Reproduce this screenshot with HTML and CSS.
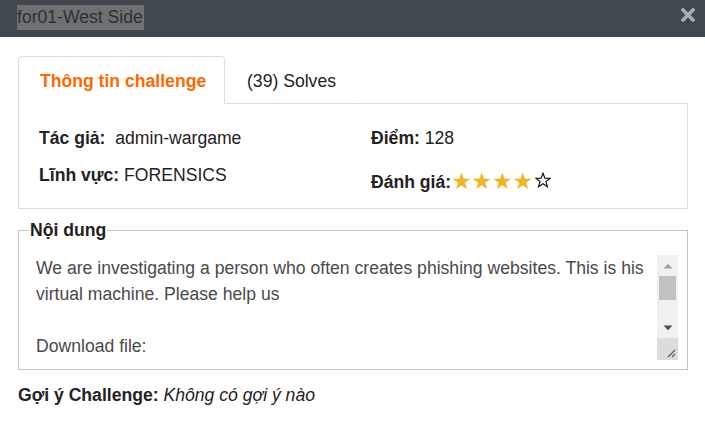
FILE: index.html
```html
<!DOCTYPE html>
<html lang="vi">
<head>
<meta charset="utf-8">
<link rel="stylesheet" href="styles.css">
</head>
<body>
<div class="modal">
  <div class="modal-header">
    <span class="title">for01-West Side</span>
    <svg class="close" width="14" height="14" viewBox="0 0 14 14"><path d="M2 2L12 12M12 2L2 12" stroke="#a9adb1" stroke-width="3.6" stroke-linecap="square"/></svg>
  </div>
  <div class="modal-body">
    <div class="tabs">
      <div class="tab active">Thông tin challenge</div>
      <div class="tab">(39) Solves</div>
      <div class="tab-fill"></div>
    </div>
    <div class="panel">
      <div class="info">
        <div class="cell"><b>Tác giả:</b>&nbsp; admin-wargame</div>
        <div class="cell"><b>Điểm:</b> 128</div>
        <div class="cell"><b>Lĩnh vực:</b> FORENSICS</div>
        <div class="cell rating"><b>Đánh giá:</b><span class="stars"><span class="on">★★★★</span></span><svg class="star-off" width="16" height="16" viewBox="0 0 16 16"><path d="M8 1.2L9.9 6.1L15.1 6.3L11 9.6L12.4 14.7L8 11.8L3.6 14.7L5 9.6L0.9 6.3L6.1 6.1Z" fill="none" stroke="#111" stroke-width="1.2" stroke-linejoin="miter"/></svg></div>
      </div>
    </div>
    <fieldset class="content">
      <legend>Nội dung</legend>
      <div class="desc-box">
        <textarea class="desc" readonly>We are investigating a person who often creates phishing websites. This is his virtual machine. Please help us

Download file:</textarea>
        <div class="scrollbar">
          <div class="sb-btn"><svg width="10" height="6" viewBox="0 0 10 6"><path d="M0.5 5.5L5 0.8L9.5 5.5Z" fill="#a3a3a3"/></svg></div>
          <div class="sb-thumb"></div>
          <div class="sb-track"></div>
          <div class="sb-btn"><svg width="10" height="6" viewBox="0 0 10 6"><path d="M0.5 0.5L5 5.2L9.5 0.5Z" fill="#505050"/></svg></div>
          <div class="sb-resizer"><svg width="21" height="22" viewBox="0 0 21 22"><path d="M18 12L11 19M18 16L15 19" stroke="#5a5a5a" stroke-width="1.2"/></svg></div>
        </div>
      </div>
    </fieldset>
    <div class="hint"><b>Gợi ý Challenge:</b> <i>Không có gợi ý nào</i></div>
  </div>
</div>
</body>
</html>
```
FILE: styles.css
```css
* { box-sizing: border-box; }
html, body { margin: 0; padding: 0; background: #fff; }
body { font-family: "Liberation Sans", Arial, sans-serif; font-size: 17.6px; color: #222; }

.modal-header {
  height: 37px;
  background: #41474f;
  display: flex;
  align-items: flex-start;
  justify-content: space-between;
  padding: 5px 10px 0 17px;
}
.title {
  background: #6e7173;
  color: #2d2f31;
  font-size: 17.6px;
  line-height: 25px;
  height: 25px;
  padding: 0 1px 0 0;
}
.close { display: block; margin-top: 3px; }

.modal-body { padding: 19px 17px 0 18px; }

.tabs { display: flex; height: 48px; }
.tab {
  padding: 0 21px;
  line-height: 48px;
  color: #222;
  border: 1px solid transparent;
  border-bottom: 1px solid #ddd;
}
.tab.active {
  color: #ff6a00;
  font-weight: bold;
  border: 1px solid #ddd;
  border-bottom-color: #fff;
  border-radius: 4px 4px 0 0;
  width: 207px;
  padding-left: 21px;
  white-space: nowrap;
}
.tab-fill { flex: 1; border-bottom: 1px solid #ddd; }

.panel {
  border: 1px solid #ddd;
  border-top: none;
  height: 105px;
  padding: 22px 19px 0 20px;
}
.info {
  display: grid;
  grid-template-columns: 332px 1fr;
  row-gap: 13px;
}
.cell { line-height: 24px; height: 24px; white-space: nowrap; }
.cell.rating { margin-top: 7px; display: flex; align-items: center; }
.stars { font-family: "DejaVu Sans", sans-serif; font-size: 23px; line-height: 24px; letter-spacing: -0.2px; margin-top: -3px; }
.stars .on { color: #f0b428; }
.star-off { display: block; margin: -4px 0 0 2px; }

.content {
  margin: 12px 0 0 0;
  border: 1px solid #c4c4c4;
  padding: 0 9px 9px 10px;
}
.content legend {
  font-weight: bold;
  padding: 0 1px;
  margin-left: 0;
  line-height: 18px;
}
.desc-box {
  display: flex;
  height: 105px;
  margin-top: 16px;
}
.desc {
  flex: 1;
  display: block;
  height: 105px;
  margin: 0;
  border: none;
  outline: none;
  padding: 0 8px 0 7px;
  font-family: "Liberation Sans", Arial, sans-serif;
  font-size: 17.6px;
  line-height: 26px;
  color: #4a4a4a;
  resize: none;
  overflow: hidden;
  background: #fff;
}
.scrollbar {
  width: 21px;
  display: flex;
  flex-direction: column;
  background: #f1f1f1;
}
.sb-btn { height: 21px; display: flex; align-items: center; justify-content: center; }
.sb-btn svg { display: block; }
.sb-thumb { height: 24px; margin: 0 2px; background: #c1c1c1; }
.sb-track { flex: 1; }
.sb-resizer { height: 22px; background: #dcdcdc; }
.sb-resizer svg { display: block; }

.hint { margin-top: 15px; line-height: 20px; }
```
